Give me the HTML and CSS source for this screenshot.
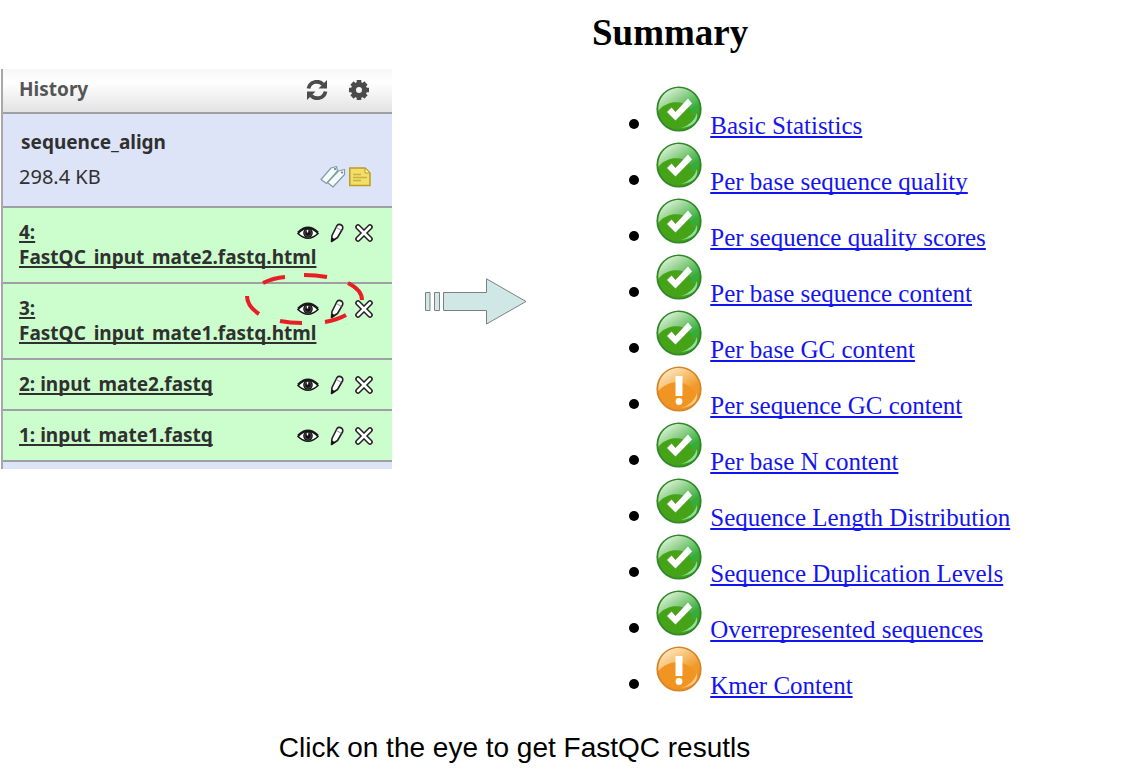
FILE: index.html
```html
<!DOCTYPE html>
<html lang="en">
<head>
<meta charset="utf-8">
<title>FastQC results</title>
<link rel="stylesheet" href="styles.css">
</head>
<body>
<svg class="defs" aria-hidden="true">
  <defs>
    <linearGradient id="gloss-green" x1="0" y1="0" x2="1" y2="1">
      <stop offset="0.1" stop-color="#e2f4df"/><stop offset="0.45" stop-color="#8fd08a"/><stop offset="0.8" stop-color="#35ad3c"/>
    </linearGradient>
    <linearGradient id="gloss-orange" x1="0" y1="0" x2="1" y2="1">
      <stop offset="0.1" stop-color="#fdebcb"/><stop offset="0.5" stop-color="#f7be6c"/><stop offset="0.8" stop-color="#f09a2c"/>
    </linearGradient>
    <symbol id="pass" viewBox="0 0 46 46">
      <circle cx="23" cy="23" r="21.7" fill="#46a318" stroke="#30872a" stroke-width="1.8"/>
      <path d="M2.5 25A20.6 20.6 0 0 1 43.4 20C42 28 39 31 36 29C30 15 12 14 2.5 25Z" fill="url(#gloss-green)"/>
      <path d="M3 24C12 14 27 14 34 22L38 32L23 40L7 36Z" fill="#46a318"/>
      <path d="M25 42Q38 38 41 27Q43 40 25 42Z" fill="#8fe0a0"/>
      <path d="M11 26L15.500 21.500L19.500 26L32 12.500L36 17.500L19.500 34.500Z" fill="#fff"/>
    </symbol>
    <symbol id="warn" viewBox="0 0 46 46">
      <circle cx="23" cy="23" r="21.7" fill="#f09422" stroke="#d58528" stroke-width="1.8"/>
      <path d="M2.500 25A20.600 20.600 0 0 1 43.400 20Q43 24 40 27C31 14 12 14 2.500 25Z" fill="url(#gloss-orange)"/>
      <path d="M3 25C12 14 28 13 36 24L34 36L12 36Z" fill="#f09422"/>
      <path d="M25 42Q38 38 41 27Q43 40 25 42Z" fill="#fac982"/>
      <path d="M19.500 10H26.500V30H19.500Z" fill="#fff"/><circle cx="23" cy="35.500" r="3.400" fill="#fff"/>
    </symbol>
    <symbol id="eye" viewBox="0 0 22 16">
      <path d="M1 8.500Q11-2 21 8.500Q11 18 1 8.500Z" fill="#fff" stroke="#181818" stroke-width="1.600"/>
      <path d="M1 7.500Q11-2.500 21 7.500" fill="none" stroke="#181818" stroke-width="2"/>
      <circle cx="11" cy="8" r="4.800" fill="#111"/><circle cx="11" cy="8" r="3.300" fill="none" stroke="#666" stroke-width=".7"/><path d="M10.500 5V7.500" stroke="#fff" stroke-width="1.400"/>
    </symbol>
    <symbol id="pencil" viewBox="0 0 14 20">
      <path d="M1.500 18.500L2 12.500L7 2.500Q9 .3 12 2.500Q13.300 4 12.500 6L7.500 14.500Z" fill="#fff" stroke="#222" stroke-width="1.600" stroke-linejoin="round"/>
      <path d="M1.300 19L2 14.500L5.500 16.500Z" fill="#111"/><path d="M6.500 4.500L11.500 7.500" stroke="#777" stroke-width=".8"/>
    </symbol>
    <symbol id="cross" viewBox="0 0 18 18">
      <path d="M3 3L15 15M15 3L3 15" stroke="#222" stroke-width="5.600" stroke-linecap="round"/>
      <path d="M3 3L15 15M15 3L3 15" stroke="#fff" stroke-width="2.600" stroke-linecap="round"/>
    </symbol>
  </defs>
</svg>
<main class="figure">
  <section class="history">
    <header class="history-head">
      <h1 class="history-title">History</h1>
      <div class="head-tools">
        <button class="tool" aria-label="Refresh"><svg width="22" height="20" viewBox="0 0 22 20"><path d="M2.500 8.500C4 1 13 0 17 4.500" fill="none" stroke="#4b4b4b" stroke-width="3.800"/><path d="M21 0V8.500H12.500Z" fill="#4b4b4b"/><path d="M19.500 11.500C18 19 9 20 5 15.500" fill="none" stroke="#4b4b4b" stroke-width="3.800"/><path d="M1 20V11.500H9.500Z" fill="#4b4b4b"/></svg></button>
        <button class="tool" aria-label="Options"><svg width="22" height="20" viewBox="0 0 22 20"><circle cx="11" cy="10" r="5.500" fill="none" stroke="#4b4b4b" stroke-width="5"/><path d="M11 0V4M11 16V20M1 10H5M17 10H21M4 3L7 6M15 14L18 17M18 3L15 6M7 14L4 17" stroke="#4b4b4b" stroke-width="4.600"/></svg></button>
      </div>
    </header>
    <div class="history-info">
      <h2 class="history-name">sequence_align</h2>
      <div class="info-row">
        <span>298.4 KB</span>
        <div class="info-tools">
          <button class="tool" aria-label="Tags"><svg width="26" height="24" viewBox="0 0 26 24"><g fill="#f6fbfb" stroke="#7e9ea6" stroke-width="1.200" stroke-linejoin="round"><path d="M1 14.500L11 3L16.500 1.500L17.500 6L6.500 18.500Z"/><path d="M7.500 17.500L18.500 6L24.500 4.500V9.500L13 22Z"/></g><circle cx="15" cy="4" r="1" fill="#557780"/><circle cx="22" cy="7.500" r="1" fill="#557780"/></svg></button>
          <button class="tool" aria-label="Annotation"><svg width="22" height="20" viewBox="0 0 22 20"><path d="M.8 1H16L21 6V18.500H.8Z" fill="#f3df65" stroke="#bd9b27" stroke-width="1.500"/><path d="M16 1V6H21Z" fill="#fff6b0" stroke="#bd9b27"/><path d="M4 7.500H12M4 10.500H18M4 13.500H12" stroke="#c9b04c" stroke-width="1.500"/></svg></button>
        </div>
      </div>
    </div>
    <ul class="datasets">
      <li class="dataset">
        <div class="actions"><button class="tool" aria-label="View data"><svg width="22" height="16"><use href="#eye"/></svg></button><button class="tool" aria-label="Edit"><svg width="14" height="20"><use href="#pencil"/></svg></button><button class="tool" aria-label="Delete"><svg width="18" height="18"><use href="#cross"/></svg></button></div>
        <a class="dataset-link" href="#">4:<br>FastQC_input_mate2.fastq.html</a>
      </li>
      <li class="dataset">
        <div class="actions"><button class="tool" aria-label="View data"><svg width="22" height="16"><use href="#eye"/></svg></button><button class="tool" aria-label="Edit"><svg width="14" height="20"><use href="#pencil"/></svg></button><button class="tool" aria-label="Delete"><svg width="18" height="18"><use href="#cross"/></svg></button></div>
        <a class="dataset-link" href="#">3:<br>FastQC_input_mate1.fastq.html</a>
        <svg class="highlight" width="120" height="54" viewBox="0 0 120 54" aria-hidden="true"><path d="M19 11Q29 6 41 5M60 3Q72 3 83 5M104 11Q118 18 118 28M102 43Q93 48 81 50M58 51Q46 51 36 49M15 42Q3 34 3 24" fill="none" stroke="#e61e25" stroke-width="4"/></svg>
      </li>
      <li class="dataset">
        <div class="actions"><button class="tool" aria-label="View data"><svg width="22" height="16"><use href="#eye"/></svg></button><button class="tool" aria-label="Edit"><svg width="14" height="20"><use href="#pencil"/></svg></button><button class="tool" aria-label="Delete"><svg width="18" height="18"><use href="#cross"/></svg></button></div>
        <a class="dataset-link" href="#">2: input_mate2.fastq</a>
      </li>
      <li class="dataset">
        <div class="actions"><button class="tool" aria-label="View data"><svg width="22" height="16"><use href="#eye"/></svg></button><button class="tool" aria-label="Edit"><svg width="14" height="20"><use href="#pencil"/></svg></button><button class="tool" aria-label="Delete"><svg width="18" height="18"><use href="#cross"/></svg></button></div>
        <a class="dataset-link" href="#">1: input_mate1.fastq</a>
      </li>
    </ul>
  </section>
  <div class="arrow"><svg width="102" height="48" viewBox="0 0 102 48" aria-hidden="true"><path d="M.5 14.500H5V32.500H.5ZM9.500 14.500H14.500V32.500H9.500ZM18.500 14.500H61.500V.8L101 23.500L61.500 46V32.500H18.500Z" fill="#cfe7e5" stroke="#808080"/></svg></div>
  <section class="summary">
    <h2 class="summary-title">Summary</h2>
    <ul class="modules">
      <li><svg class="status"><use href="#pass"/></svg> <a href="#">Basic Statistics</a></li>
      <li><svg class="status"><use href="#pass"/></svg> <a href="#">Per base sequence quality</a></li>
      <li><svg class="status"><use href="#pass"/></svg> <a href="#">Per sequence quality scores</a></li>
      <li><svg class="status"><use href="#pass"/></svg> <a href="#">Per base sequence content</a></li>
      <li><svg class="status"><use href="#pass"/></svg> <a href="#">Per base GC content</a></li>
      <li><svg class="status"><use href="#warn"/></svg> <a href="#">Per sequence GC content</a></li>
      <li><svg class="status"><use href="#pass"/></svg> <a href="#">Per base N content</a></li>
      <li><svg class="status"><use href="#pass"/></svg> <a href="#">Sequence Length Distribution</a></li>
      <li><svg class="status"><use href="#pass"/></svg> <a href="#">Sequence Duplication Levels</a></li>
      <li><svg class="status"><use href="#pass"/></svg> <a href="#">Overrepresented sequences</a></li>
      <li><svg class="status"><use href="#warn"/></svg> <a href="#">Kmer Content</a></li>
    </ul>
  </section>
</main>
<p class="caption">Click on the eye to get FastQC resutls</p>
</body>
</html>
```
FILE: styles.css
```css
* { box-sizing: border-box; }
body { margin: 0; background: #fff; color: #000; }
h1, h2, p, ul { margin: 0; padding: 0; }
.defs { position: absolute; width: 0; height: 0; }
.figure { display: grid; grid-template-columns: 392fr 200fr 544fr; align-items: start; }

.history { margin: 69px 0 0 1px; border-left: 2px solid #a8a8ac; background: #dee4f8; padding-bottom: 7px; font: 20px/25px "Noto Sans", sans-serif; color: #303030; }
.history-head { display: flex; justify-content: space-between; align-items: center; padding: 8px 22px 10px 16px; border-bottom: 2px solid #a0a0a4; background: linear-gradient(#f7f7f7, #fff 30%, #e3e3e3); }
.history-title { font-size: 19px; line-height: 25px; color: #555; }
.head-tools { display: flex; gap: 20px; }
.tool { display: block; border: 0; padding: 0; background: none; cursor: pointer; }
.tool svg { display: block; }
.history-info { padding: 16px 21px 17px 16px; border-bottom: 2px solid #a0a0a4; }
.history-name { font-size: 19px; line-height: 25px; padding-left: 2px; }
.info-row { display: flex; justify-content: space-between; align-items: center; padding-top: 9px; }
.info-tools { display: flex; align-items: center; gap: 3px; }
.datasets { list-style: none; }
.dataset { position: relative; padding: 12px 19px 12px 16px; border-bottom: 2px solid #a0a0a4; background: #ccfdcc; font-size: 19px; }
.dataset-link { color: #303030; font-weight: bold; text-decoration: underline 2px; text-decoration-skip-ink: none; text-underline-offset: 2px; }
.actions { float: right; display: flex; align-items: center; gap: 11px; height: 25px; }
.highlight { position: absolute; top: -12px; right: 28px; pointer-events: none; }

.arrow { display: flex; justify-content: center; padding: 278px 0 0; }
.arrow svg { margin-right: 32px; }

.summary { padding-top: 11px; font-family: "Liberation Serif", serif; }
.summary-title { font-size: 37px; line-height: 43px; }
.modules { padding: 32px 0 0 64px; font-size: 25px; line-height: 32px; }
.modules li::marker { font-size: 34px; }
.modules a { color: #1414f0; text-decoration: underline 2px; text-decoration-skip-ink: none; text-underline-offset: 2px; }
.status { width: 46px; height: 46px; margin-right: 2px; vertical-align: 2px; }

.caption { padding: 30px 107px 0 0; text-align: center; font: 28px/32px "Liberation Sans", sans-serif; }
```
